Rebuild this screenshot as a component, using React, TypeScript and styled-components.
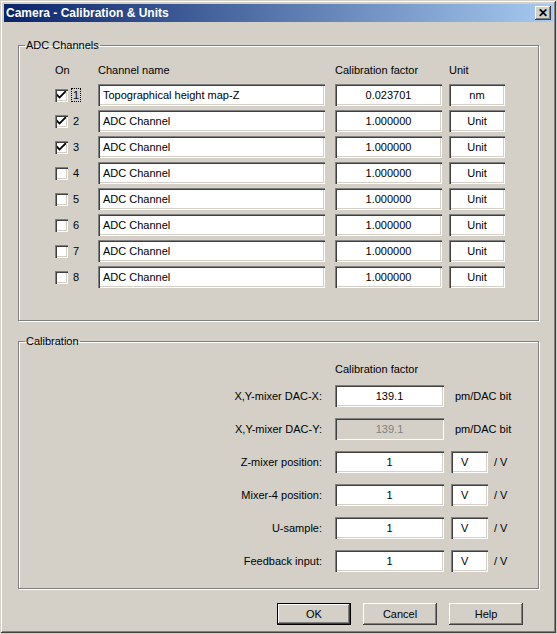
import React from "react";
import styled, { createGlobalStyle } from "styled-components";

const G = createGlobalStyle`
  html,body{margin:0;padding:0;background:#d4d0c8;}
  *{box-sizing:border-box;}
  body{font-family:Tahoma,"Liberation Sans",Arial,sans-serif;font-size:11px;color:#000;}
`;

const Win = styled.div`
  width:557px;height:634px;background:#d4d0c8;
  border:1px solid #d4d0c8;
  box-shadow: inset -1px -1px 0 #404040, inset 1px 1px 0 #fff, inset -2px -2px 0 #808080;
  padding:3px;display:flex;flex-direction:column;
`;
const Title = styled.div`
  height:18px;background:linear-gradient(90deg,#0a246a,#a6caf0);
  color:#fff;font-weight:bold;font-size:12px;display:flex;align-items:center;
  justify-content:space-between;padding:0 2px 0 2px;
`;
const CloseBtn = styled.div`
  width:16px;height:14px;background:#d4d0c8;color:#000;display:flex;align-items:center;justify-content:center;
  box-shadow: inset -1px -1px 0 #404040, inset 1px 1px 0 #fff, inset -2px -2px 0 #808080;
  font-size:12px;font-weight:bold;line-height:1;
`;
const Body = styled.div`padding:17px 14px 0 14px;display:flex;flex-direction:column;`;
const Group = styled.fieldset<{ h: number }>`
  margin:0;height:${p => p.h}px;border:1px solid #808080;box-shadow:1px 1px 0 #fff, inset 1px 1px 0 #fff;
  padding:0;position:relative;
`;
const Legend = styled.legend`padding:0 1px;margin-left:6px;`;
const Spacer = styled.div<{ h: number }>`height:${p => p.h}px;`;
const ChanGrid = styled.div`
  display:grid;grid-template-columns:43px 237px 114px 56px;column-gap:0;
  padding:13px 0 0 36px;row-gap:4px;align-items:center;
`;
const Head = styled.div<{ c?: boolean }>`height:16px;${p => (p.c ? "text-align:center;" : "")}`;
const Field = styled.div<{ w: number; al?: string; dis?: boolean; pl?: number }>`
  width:${p => p.w}px;height:22px;background:${p => (p.dis ? "#d4d0c8" : "#fff")};
  color:${p => (p.dis ? "#808080" : "#000")};
  box-shadow: inset 1px 1px 0 #808080, inset 2px 2px 0 #404040, inset -1px -1px 0 #fff, inset -2px -2px 0 #d4d0c8;
  display:flex;align-items:center;padding:0 5px 0 ${p => p.pl ?? 5}px;
  justify-content:${p => p.al || "flex-start"};
`;
const CheckCell = styled.div`display:flex;align-items:center;gap:4px;`;
const Box = styled.div`
  width:13px;height:13px;background:#fff;display:flex;align-items:center;justify-content:center;
  box-shadow: inset 1px 1px 0 #808080, inset 2px 2px 0 #404040, inset -1px -1px 0 #fff, inset -2px -2px 0 #d4d0c8;
`;
const Num = styled.span<{ focus?: boolean }>`
  ${p => (p.focus ? "outline:1px dotted #000;" : "")} padding:0 1px;
`;
const CalGrid = styled.div`
  display:grid;grid-template-columns:316px 116px 43px auto;align-items:center;row-gap:11px;
  padding:16px 0 0 0;
`;
const CalHead = styled.div`grid-column:2 / 4;height:14px;margin-bottom:-3px;`;
const Unit = styled.div`grid-column:3 / 5;padding-left:4px;`;
const Lbl = styled.div`text-align:right;padding-right:13px;`;
const Btns = styled.div`display:flex;gap:12px;justify-content:flex-end;padding:14px 16px 0 0;`;
const Btn = styled.div<{ def?: boolean }>`
  width:74px;height:22px;display:flex;align-items:center;justify-content:center;
  box-shadow:${p => (p.def
    ? "inset 0 0 0 1px #000, inset -2px -2px 0 #404040, inset 2px 2px 0 #fff, inset -3px -3px 0 #808080"
    : "inset -1px -1px 0 #404040, inset 1px 1px 0 #fff, inset -2px -2px 0 #808080")};
`;

const Tick = () => (
  <svg width="9" height="9" viewBox="0 0 7 7"><path d="M0 2 L0 4 L2 6 L7 1 L7 -1 L2 4 Z" fill="#000" /></svg>
);

const chans = [
  ["Topographical height map-Z", "0.023701", "nm", true],
  ["ADC Channel", "1.000000", "Unit", true],
  ["ADC Channel", "1.000000", "Unit", true],
  ["ADC Channel", "1.000000", "Unit", false],
  ["ADC Channel", "1.000000", "Unit", false],
  ["ADC Channel", "1.000000", "Unit", false],
  ["ADC Channel", "1.000000", "Unit", false],
  ["ADC Channel", "1.000000", "Unit", false],
] as const;

const cal = ["Z-mixer position:", "Mixer-4 position:", "U-sample:", "Feedback input:"];

export default function App() {
  return (
    <Win>
      <G />
      <Title>
        <span>Camera - Calibration &amp; Units</span>
        <CloseBtn>✕</CloseBtn>
      </Title>
      <Body>
        <Group h={282}>
          <Legend>ADC Channels</Legend>
          <ChanGrid>
            <Head>On</Head><Head>Channel name</Head><Head>Calibration factor</Head><Head>Unit</Head>
            {chans.map(([n, f, u, on], i) => (
              <React.Fragment key={i}>
                <CheckCell><Box>{on && <Tick />}</Box><Num focus={i === 0}>{i + 1}</Num></CheckCell>
                <Field w={227}>{n}</Field>
                <Field w={107} al="center">{f}</Field>
                <Field w={56} al="center">{u}</Field>
              </React.Fragment>
            ))}
          </ChanGrid>
        </Group>
        <Spacer h={14} />
        <Group h={254}>
          <Legend>Calibration</Legend>
          <CalGrid>
            <div /><CalHead>Calibration factor</CalHead><div />
            <Lbl>X,Y-mixer DAC-X:</Lbl><Field w={109} al="center">139.1</Field><Unit>pm/DAC bit</Unit>
            <Lbl>X,Y-mixer DAC-Y:</Lbl><Field w={109} al="center" dis>139.1</Field><Unit>pm/DAC bit</Unit>
            {cal.map(c => (
              <React.Fragment key={c}>
                <Lbl>{c}</Lbl><Field w={109} al="center">1</Field><Field w={37} pl={10}>V</Field><div>/ V</div>
              </React.Fragment>
            ))}
          </CalGrid>
        </Group>
        <Btns><Btn def>OK</Btn><Btn>Cancel</Btn><Btn>Help</Btn></Btns>
      </Body>
    </Win>
  );
}
